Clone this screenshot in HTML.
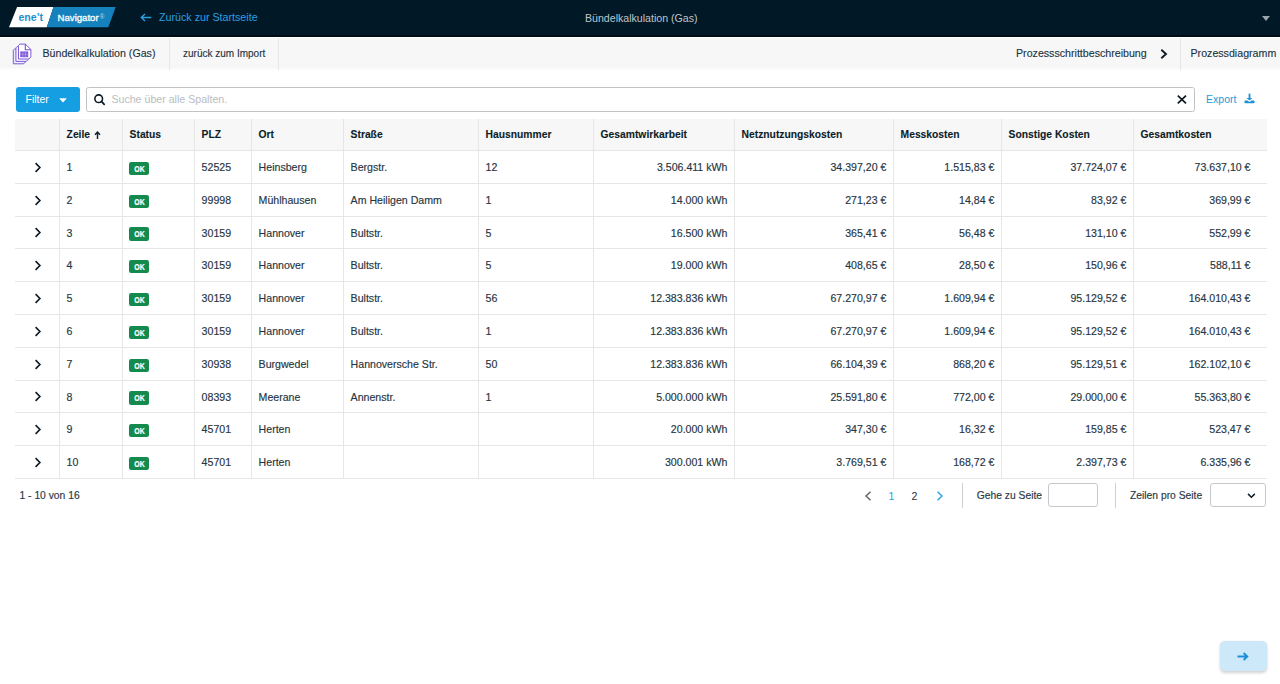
<!DOCTYPE html>
<html><head><meta charset="utf-8">
<style>
*{box-sizing:border-box;margin:0;padding:0}
html,body{width:1280px;height:684px;overflow:hidden;background:#fff;font-family:"Liberation Sans",sans-serif;color:#33414b;position:relative}
div{position:absolute;white-space:nowrap}
.top{left:0;top:0;width:1280px;height:36.8px;background:#011826;box-shadow:inset 0 -2px 0 #000c15}
.logo{position:absolute;left:9px;top:7px}
svg{display:block}
.back{left:159px;top:10.5px;font-size:10.7px;color:#2f9fe0}
.title{left:585px;top:11.5px;font-size:10.6px;color:#bfc6cc}
.caret{left:1262px;top:16px;width:0;height:0;border-left:4px solid transparent;border-right:4px solid transparent;border-top:5px solid #9aa3a9}
.sub{left:0;top:36.5px;width:1280px;height:33px;background:linear-gradient(#fff 0,#fff 0.9px,#f7f7f7 1.1px,#f7f7f7 31px,#fbfbfb 31.1px)}
.sub .t{top:10.5px;font-size:10.65px;color:#22323e;-webkit-text-stroke:0.12px #22323e}
.vsep{top:1px;width:1px;height:32px;background:#e6e6e6}
.filter{left:15.5px;top:87px;width:64px;height:25px;background:#159ee2;border-radius:3px;color:#fff;font-size:10.5px}
.filter .l{left:10px;top:5.7px}
.search{left:86.1px;top:87px;width:1109.4px;height:25px;border:1.4px solid #c0c3c6;border-radius:2.5px;background:#fff}
.search .ph{left:24.3px;top:4.6px;font-size:10.63px;color:#b9bdc1}
.export{left:1206px;top:93px;font-size:10.55px;color:#239dd9}
.hl{left:15px;width:1252px;height:1px;background:#e6e6e6}
.vl{width:1px;background:#e6e6e6}
.th{font-size:10.3px;font-weight:bold;color:#0d1d29;-webkit-text-stroke:0.1px #0d1d29}
.td{font-size:10.6px;color:#26353f;-webkit-text-stroke:0.15px #26353f}
.ok{left:129.1px;width:20px;height:13.5px;background:#158a4e;border-radius:2.2px;color:#fff;font-weight:bold;font-size:8.7px;line-height:14.2px;text-align:center}
.ok span{display:inline-block;transform:scaleX(.8);position:relative;left:0.8px;-webkit-text-stroke:0.2px #fff}
.foot{top:489.5px;font-size:10.3px;color:#2a3844;-webkit-text-stroke:0.15px #2a3844}
.pin{width:49.5px;height:24.2px;border:1px solid #c4c8cb;border-radius:3px;background:#fff}
.psep{width:1.3px;height:25px;top:483px;background:#cfcfcf}
.nextbtn{left:1220px;top:640.5px;width:46.5px;height:30px;background:#cde9f9;border-radius:5px;box-shadow:0 1.5px 3px rgba(0,0,0,.18)}
</style></head><body>
<div class="top">
  <svg class="logo" width="108" height="21" viewBox="0 0 108 21">
    <polygon points="8.1,0 44.5,0 37.8,20.3 0,20.3" fill="#fff"/>
    <polygon points="44.5,0 106.7,0 99.3,20.3 37.8,20.3" fill="#1582bd"/>
    <text transform="translate(9.4,13.5) scale(1,1.1)" font-family="Liberation Sans" font-weight="bold" font-size="10.6" fill="#1b92d2">ene’t</text>
    <text x="48.6" y="13.5" font-family="Liberation Sans" font-size="9.6" fill="#fff" stroke="#fff" stroke-width="0.3">Navigator</text>
    <text x="90.8" y="11.8" font-family="Liberation Sans" font-size="6.3" fill="#bcdcee">®</text>
  </svg>
  <svg style="position:absolute;left:140px;top:13px" width="12" height="9" viewBox="0 0 12 9"><path d="M11.3 4.5 H1.5 M5 1 L1.3 4.5 L5 8" fill="none" stroke="#2f9fe0" stroke-width="1.4"/></svg>
  <div class="back">Zurück zur Startseite</div>
  <div class="title">Bündelkalkulation (Gas)</div>
  <div class="caret"></div>
</div>
<div class="sub">
  <svg style="position:absolute;left:12px;top:6px" width="22" height="23" viewBox="0 0 22 23">
    <path transform="translate(-5.2,4.8)" d="M7.8,1.1 L13.3,1.1 L18.9,6.5 L18.9,13.9 L16.9,16 L6.5,16 L6.5,2.5 Z" fill="#f1ecfc" stroke="#7d5cd6" stroke-width="1" stroke-linejoin="round"/>
    <path transform="translate(-2.6,2.4)" d="M7.8,1.1 L13.3,1.1 L18.9,6.5 L18.9,13.9 L16.9,16 L6.5,16 L6.5,2.5 Z" fill="#f6f2fd" stroke="#7d5cd6" stroke-width="1" stroke-linejoin="round"/>
    <path d="M7.8,1.1 L13.3,1.1 L18.9,6.5 L18.9,13.9 L16.9,16 L6.5,16 L6.5,2.5 Z" fill="#fff" stroke="#7d5cd6" stroke-width="1" stroke-linejoin="round"/>
    <path d="M13.3,1.1 V6.7 H18.9" fill="none" stroke="#7450d2" stroke-width="1.1"/>
    <rect x="8.2" y="8.4" width="8" height="5.8" fill="#7f5cd6"/>
    <path d="M10.9 8.4 V14.2 M13.5 8.4 V14.2 M8.2 11.3 H16.2" stroke="#b9a6ea" stroke-width="0.6"/>
  </svg>
  <div class="t" style="left:42.5px">Bündelkalkulation (Gas)</div>
  <div class="vsep" style="left:168.5px"></div>
  <div class="t" style="left:183px;font-size:10px;top:11.5px">zurück zum Import</div>
  <div class="vsep" style="left:278px"></div>
  <div class="t" style="left:1016px">Prozessschrittbeschreibung</div>
  <svg style="position:absolute;left:1160px;top:12.5px" width="8" height="10" viewBox="0 0 8 10"><path d="M1.3 0.8 L6 5 L1.3 9.2" fill="none" stroke="#0f1d28" stroke-width="1.9"/></svg>
  <div class="vsep" style="left:1179.5px"></div>
  <div class="t" style="left:1190.5px">Prozessdiagramm</div>
</div>
<div class="filter"><div class="l">Filter</div>
  <svg style="position:absolute;left:43.8px;top:11.2px" width="8" height="5" viewBox="0 0 8 5"><path d="M0.9 0.7 H7.1 L4 4.1 Z" fill="#fff" stroke="#fff" stroke-width="0.8" stroke-linejoin="round"/></svg>
</div>
<div class="search">
  <svg style="position:absolute;left:5.5px;top:6.3px" width="14" height="13" viewBox="0 0 14 13"><circle cx="5.7" cy="4.7" r="3.85" fill="none" stroke="#0b1822" stroke-width="1.55"/><path d="M8.4 7.4 L11.2 10.3" stroke="#0b1822" stroke-width="1.7" stroke-linecap="round"/></svg>
  <div class="ph">Suche über alle Spalten.</div>
  <svg style="position:absolute;left:1090px;top:7.3px" width="10" height="9" viewBox="0 0 10 9"><path d="M0.8 0.6 L9 8.4 M9 0.6 L0.8 8.4" stroke="#0d1a24" stroke-width="1.7"/></svg>
</div>
<div class="export">Export</div>
<svg style="position:absolute;left:1244.4px;top:93px" width="11" height="11" viewBox="0 0 11 11"><rect x="4.6" y="0.6" width="1.8" height="4.6" fill="#1892d8"/><path d="M2.6 4.9 H8.4 L5.5 7.6 Z" fill="#1892d8"/><path d="M0.4 8.6 Q0.4 7.4 1.6 7.4 H3.4 L5.5 9.1 L7.6 7.4 H9.4 Q10.6 7.4 10.6 8.6 V9.1 Q10.6 10.3 9.4 10.3 H1.6 Q0.4 10.3 0.4 9.1 Z" fill="#1892d8"/></svg>
<div style="position:absolute;left:15px;top:119px;width:1252px;height:31px;background:#f7f7f7"></div>
<div class="hl" style="top:150px"></div>
<div class="hl" style="top:183px"></div>
<div class="hl" style="top:216px"></div>
<div class="hl" style="top:248px"></div>
<div class="hl" style="top:281px"></div>
<div class="hl" style="top:314px"></div>
<div class="hl" style="top:347px"></div>
<div class="hl" style="top:380px"></div>
<div class="hl" style="top:412px"></div>
<div class="hl" style="top:445px"></div>
<div class="hl" style="top:478px"></div>
<div class="vl" style="left:59px;top:119px;height:359px"></div>
<div class="vl" style="left:122px;top:119px;height:359px"></div>
<div class="vl" style="left:194px;top:119px;height:359px"></div>
<div class="vl" style="left:251px;top:119px;height:359px"></div>
<div class="vl" style="left:343px;top:119px;height:359px"></div>
<div class="vl" style="left:478px;top:119px;height:359px"></div>
<div class="vl" style="left:593px;top:119px;height:359px"></div>
<div class="vl" style="left:734px;top:119px;height:359px"></div>
<div class="vl" style="left:893px;top:119px;height:359px"></div>
<div class="vl" style="left:1001px;top:119px;height:359px"></div>
<div class="vl" style="left:1133px;top:119px;height:359px"></div>
<div class="th" style="left:66.6px;top:129.4px">Zeile<svg style="position:absolute;left:27.6px;top:1.3px" width="7" height="8" viewBox="0 0 7 8"><path d="M3.5 8 V1.3 M1 3.7 L3.5 1.1 L6 3.7" fill="none" stroke="#0f1f2b" stroke-width="1.45"/></svg></div>
<div class="th" style="left:129.6px;top:129.4px">Status</div>
<div class="th" style="left:201.6px;top:129.4px">PLZ</div>
<div class="th" style="left:258.6px;top:129.4px">Ort</div>
<div class="th" style="left:350.6px;top:129.4px">Straße</div>
<div class="th" style="left:485.6px;top:129.4px">Hausnummer</div>
<div class="th" style="left:600.6px;top:129.4px">Gesamtwirkarbeit</div>
<div class="th" style="left:741.6px;top:129.4px">Netznutzungskosten</div>
<div class="th" style="left:900.6px;top:129.4px">Messkosten</div>
<div class="th" style="left:1008.6px;top:129.4px">Sonstige Kosten</div>
<div class="th" style="left:1140.6px;top:129.4px">Gesamtkosten</div>
<div style="position:absolute;left:34px;top:161.9px;width:8px;height:11px"><svg width="8" height="11" viewBox="0 0 8 11"><path d="M1.6 1.1 L5.9 5.5 L1.6 9.9" fill="none" stroke="#0f1d28" stroke-width="1.65"/></svg></div>
<div class="td" style="left:66.6px;top:161.1px">1</div>
<div class="ok" style="left:129px;top:161.9px"><span>OK</span></div>
<div class="td" style="left:201.6px;top:161.1px">52525</div>
<div class="td" style="left:258.6px;top:161.1px">Heinsberg</div>
<div class="td" style="left:350.6px;top:161.1px">Bergstr.</div>
<div class="td" style="left:485.6px;top:161.1px">12</div>
<div class="td" style="right:552.6px;top:161.1px">3.506.411 kWh</div>
<div class="td" style="right:393.6px;top:161.1px">34.397,20 €</div>
<div class="td" style="right:285.6px;top:161.1px">1.515,83 €</div>
<div class="td" style="right:153.6px;top:161.1px">37.724,07 €</div>
<div class="td" style="right:29.5px;top:161.1px">73.637,10 €</div>
<div style="position:absolute;left:34px;top:194.9px;width:8px;height:11px"><svg width="8" height="11" viewBox="0 0 8 11"><path d="M1.6 1.1 L5.9 5.5 L1.6 9.9" fill="none" stroke="#0f1d28" stroke-width="1.65"/></svg></div>
<div class="td" style="left:66.6px;top:194.1px">2</div>
<div class="ok" style="left:129px;top:194.9px"><span>OK</span></div>
<div class="td" style="left:201.6px;top:194.1px">99998</div>
<div class="td" style="left:258.6px;top:194.1px">Mühlhausen</div>
<div class="td" style="left:350.6px;top:194.1px">Am Heiligen Damm</div>
<div class="td" style="left:485.6px;top:194.1px">1</div>
<div class="td" style="right:552.6px;top:194.1px">14.000 kWh</div>
<div class="td" style="right:393.6px;top:194.1px">271,23 €</div>
<div class="td" style="right:285.6px;top:194.1px">14,84 €</div>
<div class="td" style="right:153.6px;top:194.1px">83,92 €</div>
<div class="td" style="right:29.5px;top:194.1px">369,99 €</div>
<div style="position:absolute;left:34px;top:227.4px;width:8px;height:11px"><svg width="8" height="11" viewBox="0 0 8 11"><path d="M1.6 1.1 L5.9 5.5 L1.6 9.9" fill="none" stroke="#0f1d28" stroke-width="1.65"/></svg></div>
<div class="td" style="left:66.6px;top:226.6px">3</div>
<div class="ok" style="left:129px;top:227.4px"><span>OK</span></div>
<div class="td" style="left:201.6px;top:226.6px">30159</div>
<div class="td" style="left:258.6px;top:226.6px">Hannover</div>
<div class="td" style="left:350.6px;top:226.6px">Bultstr.</div>
<div class="td" style="left:485.6px;top:226.6px">5</div>
<div class="td" style="right:552.6px;top:226.6px">16.500 kWh</div>
<div class="td" style="right:393.6px;top:226.6px">365,41 €</div>
<div class="td" style="right:285.6px;top:226.6px">56,48 €</div>
<div class="td" style="right:153.6px;top:226.6px">131,10 €</div>
<div class="td" style="right:29.5px;top:226.6px">552,99 €</div>
<div style="position:absolute;left:34px;top:259.9px;width:8px;height:11px"><svg width="8" height="11" viewBox="0 0 8 11"><path d="M1.6 1.1 L5.9 5.5 L1.6 9.9" fill="none" stroke="#0f1d28" stroke-width="1.65"/></svg></div>
<div class="td" style="left:66.6px;top:259.1px">4</div>
<div class="ok" style="left:129px;top:259.9px"><span>OK</span></div>
<div class="td" style="left:201.6px;top:259.1px">30159</div>
<div class="td" style="left:258.6px;top:259.1px">Hannover</div>
<div class="td" style="left:350.6px;top:259.1px">Bultstr.</div>
<div class="td" style="left:485.6px;top:259.1px">5</div>
<div class="td" style="right:552.6px;top:259.1px">19.000 kWh</div>
<div class="td" style="right:393.6px;top:259.1px">408,65 €</div>
<div class="td" style="right:285.6px;top:259.1px">28,50 €</div>
<div class="td" style="right:153.6px;top:259.1px">150,96 €</div>
<div class="td" style="right:29.5px;top:259.1px">588,11 €</div>
<div style="position:absolute;left:34px;top:292.9px;width:8px;height:11px"><svg width="8" height="11" viewBox="0 0 8 11"><path d="M1.6 1.1 L5.9 5.5 L1.6 9.9" fill="none" stroke="#0f1d28" stroke-width="1.65"/></svg></div>
<div class="td" style="left:66.6px;top:292.1px">5</div>
<div class="ok" style="left:129px;top:292.9px"><span>OK</span></div>
<div class="td" style="left:201.6px;top:292.1px">30159</div>
<div class="td" style="left:258.6px;top:292.1px">Hannover</div>
<div class="td" style="left:350.6px;top:292.1px">Bultstr.</div>
<div class="td" style="left:485.6px;top:292.1px">56</div>
<div class="td" style="right:552.6px;top:292.1px">12.383.836 kWh</div>
<div class="td" style="right:393.6px;top:292.1px">67.270,97 €</div>
<div class="td" style="right:285.6px;top:292.1px">1.609,94 €</div>
<div class="td" style="right:153.6px;top:292.1px">95.129,52 €</div>
<div class="td" style="right:29.5px;top:292.1px">164.010,43 €</div>
<div style="position:absolute;left:34px;top:325.9px;width:8px;height:11px"><svg width="8" height="11" viewBox="0 0 8 11"><path d="M1.6 1.1 L5.9 5.5 L1.6 9.9" fill="none" stroke="#0f1d28" stroke-width="1.65"/></svg></div>
<div class="td" style="left:66.6px;top:325.1px">6</div>
<div class="ok" style="left:129px;top:325.9px"><span>OK</span></div>
<div class="td" style="left:201.6px;top:325.1px">30159</div>
<div class="td" style="left:258.6px;top:325.1px">Hannover</div>
<div class="td" style="left:350.6px;top:325.1px">Bultstr.</div>
<div class="td" style="left:485.6px;top:325.1px">1</div>
<div class="td" style="right:552.6px;top:325.1px">12.383.836 kWh</div>
<div class="td" style="right:393.6px;top:325.1px">67.270,97 €</div>
<div class="td" style="right:285.6px;top:325.1px">1.609,94 €</div>
<div class="td" style="right:153.6px;top:325.1px">95.129,52 €</div>
<div class="td" style="right:29.5px;top:325.1px">164.010,43 €</div>
<div style="position:absolute;left:34px;top:358.9px;width:8px;height:11px"><svg width="8" height="11" viewBox="0 0 8 11"><path d="M1.6 1.1 L5.9 5.5 L1.6 9.9" fill="none" stroke="#0f1d28" stroke-width="1.65"/></svg></div>
<div class="td" style="left:66.6px;top:358.1px">7</div>
<div class="ok" style="left:129px;top:358.9px"><span>OK</span></div>
<div class="td" style="left:201.6px;top:358.1px">30938</div>
<div class="td" style="left:258.6px;top:358.1px">Burgwedel</div>
<div class="td" style="left:350.6px;top:358.1px">Hannoversche Str.</div>
<div class="td" style="left:485.6px;top:358.1px">50</div>
<div class="td" style="right:552.6px;top:358.1px">12.383.836 kWh</div>
<div class="td" style="right:393.6px;top:358.1px">66.104,39 €</div>
<div class="td" style="right:285.6px;top:358.1px">868,20 €</div>
<div class="td" style="right:153.6px;top:358.1px">95.129,51 €</div>
<div class="td" style="right:29.5px;top:358.1px">162.102,10 €</div>
<div style="position:absolute;left:34px;top:391.4px;width:8px;height:11px"><svg width="8" height="11" viewBox="0 0 8 11"><path d="M1.6 1.1 L5.9 5.5 L1.6 9.9" fill="none" stroke="#0f1d28" stroke-width="1.65"/></svg></div>
<div class="td" style="left:66.6px;top:390.6px">8</div>
<div class="ok" style="left:129px;top:391.4px"><span>OK</span></div>
<div class="td" style="left:201.6px;top:390.6px">08393</div>
<div class="td" style="left:258.6px;top:390.6px">Meerane</div>
<div class="td" style="left:350.6px;top:390.6px">Annenstr.</div>
<div class="td" style="left:485.6px;top:390.6px">1</div>
<div class="td" style="right:552.6px;top:390.6px">5.000.000 kWh</div>
<div class="td" style="right:393.6px;top:390.6px">25.591,80 €</div>
<div class="td" style="right:285.6px;top:390.6px">772,00 €</div>
<div class="td" style="right:153.6px;top:390.6px">29.000,00 €</div>
<div class="td" style="right:29.5px;top:390.6px">55.363,80 €</div>
<div style="position:absolute;left:34px;top:423.9px;width:8px;height:11px"><svg width="8" height="11" viewBox="0 0 8 11"><path d="M1.6 1.1 L5.9 5.5 L1.6 9.9" fill="none" stroke="#0f1d28" stroke-width="1.65"/></svg></div>
<div class="td" style="left:66.6px;top:423.1px">9</div>
<div class="ok" style="left:129px;top:423.9px"><span>OK</span></div>
<div class="td" style="left:201.6px;top:423.1px">45701</div>
<div class="td" style="left:258.6px;top:423.1px">Herten</div>
<div class="td" style="right:552.6px;top:423.1px">20.000 kWh</div>
<div class="td" style="right:393.6px;top:423.1px">347,30 €</div>
<div class="td" style="right:285.6px;top:423.1px">16,32 €</div>
<div class="td" style="right:153.6px;top:423.1px">159,85 €</div>
<div class="td" style="right:29.5px;top:423.1px">523,47 €</div>
<div style="position:absolute;left:34px;top:456.9px;width:8px;height:11px"><svg width="8" height="11" viewBox="0 0 8 11"><path d="M1.6 1.1 L5.9 5.5 L1.6 9.9" fill="none" stroke="#0f1d28" stroke-width="1.65"/></svg></div>
<div class="td" style="left:66.6px;top:456.1px">10</div>
<div class="ok" style="left:129px;top:456.9px"><span>OK</span></div>
<div class="td" style="left:201.6px;top:456.1px">45701</div>
<div class="td" style="left:258.6px;top:456.1px">Herten</div>
<div class="td" style="right:552.6px;top:456.1px">300.001 kWh</div>
<div class="td" style="right:393.6px;top:456.1px">3.769,51 €</div>
<div class="td" style="right:285.6px;top:456.1px">168,72 €</div>
<div class="td" style="right:153.6px;top:456.1px">2.397,73 €</div>
<div class="td" style="right:29.5px;top:456.1px">6.335,96 €</div>
<div class="foot" style="left:19.5px">1 - 10 von 16</div>
<svg style="position:absolute;left:864px;top:490.5px" width="8" height="10" viewBox="0 0 8 10"><path d="M6.5 0.7 L2 5 L6.5 9.3" fill="none" stroke="#5a6268" stroke-width="1.4"/></svg>
<div style="left:888.5px;top:489.5px;font-size:10.6px;color:#2a9fe0">1</div>
<div style="left:911.5px;top:489.5px;font-size:10.6px;color:#1f2d38">2</div>
<svg style="position:absolute;left:935.5px;top:490.5px" width="8" height="10" viewBox="0 0 8 10"><path d="M1.5 0.7 L6 5 L1.5 9.3" fill="none" stroke="#2a9fe0" stroke-width="1.4"/></svg>
<div class="psep" style="left:961.8px"></div>
<div class="foot" style="left:976.8px">Gehe zu Seite</div>
<div class="pin" style="left:1048.3px;top:483.3px"></div>
<div class="psep" style="left:1115px"></div>
<div class="foot" style="left:1130px">Zeilen pro Seite</div>
<div class="pin" style="left:1210.3px;top:483.3px;width:55.3px">
  <svg style="position:absolute;left:35.6px;top:9.2px" width="9" height="6" viewBox="0 0 9 6"><path d="M1 0.9 L4.4 4.2 L7.8 0.9" fill="none" stroke="#0d1a24" stroke-width="1.5"/></svg>
</div>
<div class="nextbtn">
  <svg style="position:absolute;left:16.8px;top:11.3px" width="12" height="9" viewBox="0 0 12 9"><path d="M0.5 4.5 H10 M6.6 1 L10.3 4.5 L6.6 8" fill="none" stroke="#1a8fd8" stroke-width="1.9"/></svg>
</div>
</body></html>
